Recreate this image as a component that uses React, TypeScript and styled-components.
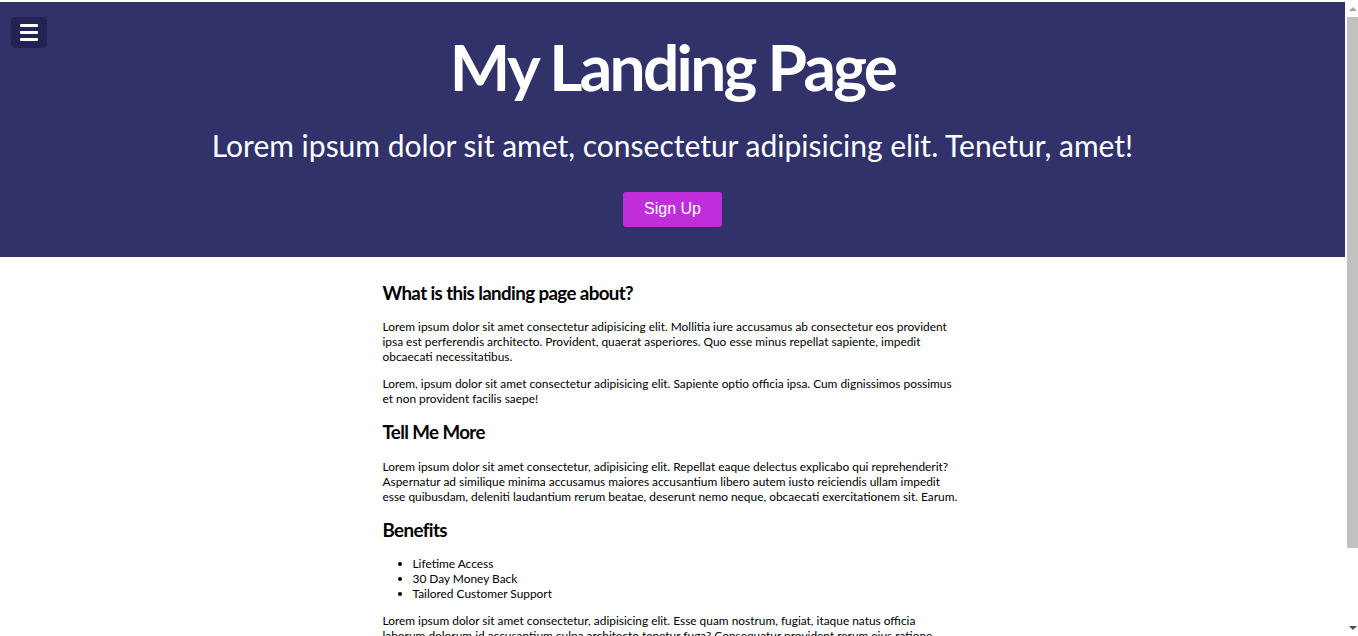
import React from "react";
import styled, { createGlobalStyle } from "styled-components";

const Global = createGlobalStyle`
  html, body { margin: 0; padding: 0; }
  html::-webkit-scrollbar { display: none; }
  body {
    font-family: Lato, "Liberation Sans", sans-serif;
    color: #000;
    background: #fff;
    padding: 2px 13px 0 0;
  }
  * { box-sizing: border-box; }
`;

const Header = styled.header`
  position: relative;
  background: #31326a;
  color: #fff;
  display: flex;
  flex-direction: column;
  align-items: center;
  padding: 27px 0 30px;
`;

const MenuButton = styled.button`
  position: absolute;
  top: 15px;
  left: 11px;
  width: 36px;
  height: 31px;
  border: none;
  border-radius: 4px;
  background: #222350;
  display: flex;
  flex-direction: column;
  align-items: center;
  justify-content: center;
  gap: 4px;
  padding: 0;
  cursor: pointer;
`;

const Bar = styled.span`
  display: block;
  width: 18px;
  height: 3px;
  background: #fff;
  border-radius: 1px;
`;

const Title = styled.h1`
  margin: 0;
  font-size: 64px;
  font-weight: 700;
  letter-spacing: -2.7px;
  line-height: 1.2;
`;

const Subtitle = styled.p`
  margin: 21px 0 0;
  font-size: 30px;
  line-height: 1.2;
`;

const SignUp = styled.button`
  margin-top: 29px;
  width: 99px;
  height: 35px;
  border: none;
  border-radius: 3px;
  background: #c02edc;
  color: #fff;
  font-family: Arial, "Liberation Sans", sans-serif;
  font-size: 16px;
  cursor: pointer;
`;

const Main = styled.main`
  width: 580px;
  margin: 0 auto;
  padding: 25px 4px 0 0;
`;

const Heading = styled.h3`
  margin: 15px 0 15px;
  font-size: 18.72px;
  font-weight: 700;
  letter-spacing: -0.6px;
  line-height: 1.2;
  &:first-child { margin-top: 0; }
`;

const Para = styled.p`
  margin: 0 0 12px;
  font-size: 11.9px;
  line-height: 15px;
`;

const List = styled.ul`
  margin: 0 0 12px;
  padding-left: 30px;
  font-size: 11.9px;
  line-height: 15px;
`;

const Scrollbar = styled.aside`
  position: fixed;
  top: 0;
  right: 0;
  width: 13px;
  height: 100vh;
  background: #fff;
  display: flex;
  flex-direction: column;
`;

const ArrowBox = styled.div`
  height: 17px;
  display: flex;
  align-items: center;
  justify-content: center;
  padding-left: 2px;
`;

const Triangle = styled.span<{ $down?: boolean }>`
  width: 0;
  height: 0;
  border-left: 4px solid transparent;
  border-right: 4px solid transparent;
  ${(p) =>
    p.$down
      ? "border-top: 4px solid #505050;"
      : "border-bottom: 4px solid #a3a3a3;"}
`;

const Thumb = styled.div`
  margin-left: 2px;
  height: 531px;
  background: #c1c1c1;
`;

const Track = styled.div`
  flex: 1;
`;

export default function App() {
  return (
    <>
      <Global />
      <Header>
        <MenuButton aria-label="menu">
          <Bar />
          <Bar />
          <Bar />
        </MenuButton>
        <Title>My Landing Page</Title>
        <Subtitle>Lorem ipsum dolor sit amet, consectetur adipisicing elit. Tenetur, amet!</Subtitle>
        <SignUp>Sign Up</SignUp>
      </Header>
      <Main>
        <Heading>What is this landing page about?</Heading>
        <Para>
          Lorem ipsum dolor sit amet consectetur adipisicing elit. Mollitia iure accusamus ab consectetur eos provident ipsa est perferendis architecto. Provident, quaerat asperiores. Quo esse minus repellat sapiente, impedit obcaecati necessitatibus.
        </Para>
        <Para>
          Lorem, ipsum dolor sit amet consectetur adipisicing elit. Sapiente optio officia ipsa. Cum dignissimos possimus et non provident facilis saepe!
        </Para>
        <Heading>Tell Me More</Heading>
        <Para>
          Lorem ipsum dolor sit amet consectetur, adipisicing elit. Repellat eaque delectus explicabo qui reprehenderit? Aspernatur ad similique minima accusamus maiores accusantium libero autem iusto reiciendis ullam impedit esse quibusdam, deleniti laudantium rerum beatae, deserunt nemo neque, obcaecati exercitationem sit. Earum.
        </Para>
        <Heading>Benefits</Heading>
        <List>
          <li>Lifetime Access</li>
          <li>30 Day Money Back</li>
          <li>Tailored Customer Support</li>
        </List>
        <Para>
          Lorem ipsum dolor sit amet consectetur, adipisicing elit. Esse quam nostrum, fugiat, itaque natus officia laborum dolorum id accusantium culpa architecto tenetur fuga? Consequatur provident rerum eius ratione, quibusdam facere dolorem aliquid, nam alias sapiente velit.
        </Para>
        <Para>
          Lorem ipsum dolor sit amet consectetur adipisicing elit. Quae, nesciunt magnam deleniti provident iste ipsum voluptatibus velit eligendi reiciendis asperiores.
        </Para>
      </Main>
      <Scrollbar aria-hidden="true">
        <ArrowBox>
          <Triangle />
        </ArrowBox>
        <Thumb />
        <Track />
        <ArrowBox>
          <Triangle $down />
        </ArrowBox>
      </Scrollbar>
    </>
  );
}
